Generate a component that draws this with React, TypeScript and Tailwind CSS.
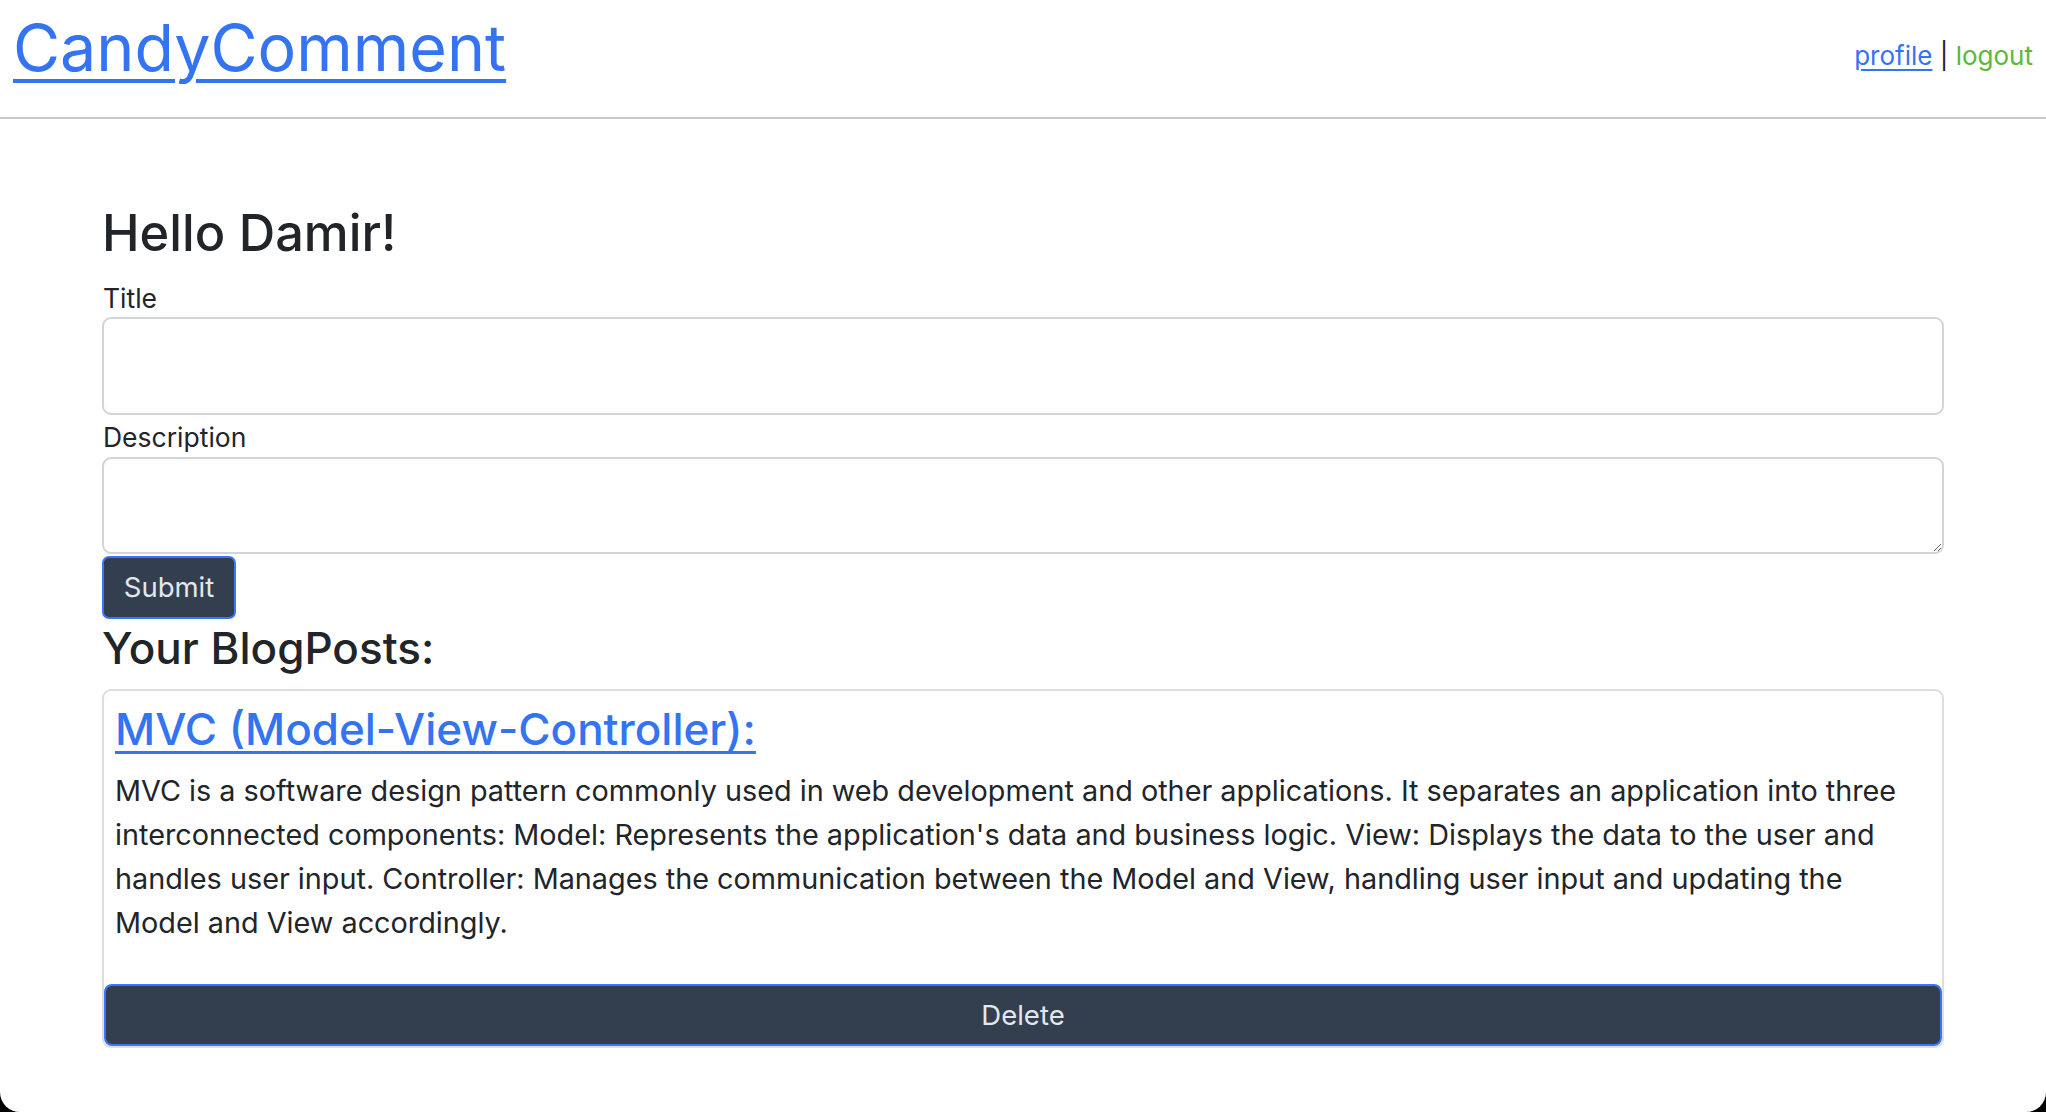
import { useState } from "react";

const post = {
  title: "MVC (Model-View-Controller):",
  body:
    "MVC is a software design pattern commonly used in web development and other applications. It separates an application into three interconnected components: Model: Represents the application's data and business logic. View: Displays the data to the user and handles user input. Controller: Manages the communication between the Model and View, handling user input and updating the Model and View accordingly.",
};

const font = "font-['Inter','Noto_Sans',sans-serif]";

const Header = () => (
  <header className="flex h-[119px] items-start justify-between border-b-2 border-[#c9c9c9] px-[13px]">
    <a
      href="#"
      className="pt-[10px] text-[64.5px] leading-[1.2] text-[#3474f2] underline decoration-[4px] underline-offset-[8px]"
    >
      CandyComment
    </a>
    <div className="pt-[36px] text-[26px] leading-[1.5] text-[#212529]">
      <a href="#" className="text-[#3474f2] underline underline-offset-[4px]">
        profile
      </a>{" "}
      |{" "}
      <a href="#" className="text-[#5cb83a]">
        logout
      </a>
    </div>
  </header>
);

const App = () => {
  const [title, setTitle] = useState("");
  const [desc, setDesc] = useState("");

  return (
    <div className={`h-screen bg-black ${font}`}>
      <div className="h-full overflow-hidden rounded-b-[20px] bg-white text-[#212529]">
        <Header />

        <main className="mx-[102px] flex flex-col">
          <h2 className="mt-[84px] text-[50.5px] font-medium leading-[1.2]">
            Hello Damir!
          </h2>

          <label className="mt-[16px] pl-px text-[26.5px] leading-[1.42]">Title</label>
          <input
            value={title}
            onChange={e => setTitle(e.target.value)}
            className="h-[98px] rounded-[9px] border-2 border-[#d0d5da] px-4 text-[27px] outline-none"
          />

          <label className="mt-[4px] pl-px text-[26.5px] leading-[1.42]">
            Description
          </label>
          <textarea
            value={desc}
            onChange={e => setDesc(e.target.value)}
            className="h-[97px] rounded-[9px] border-2 border-[#d0d5da] px-4 py-2 text-[27px] outline-none"
          />

          <button
            type="button"
            className="mt-[2px] h-[63px] w-[134px] rounded-[7px] border-2 border-[#3a76f6] bg-[#333f4f] text-[27.5px] text-[#e2e8ee]"
          >
            Submit
          </button>

          <h3 className="mt-[3px] text-[44px] font-medium leading-[1.2]">
            Your BlogPosts:
          </h3>

          <div className="mt-[14px] flex flex-col rounded-[9px] border-2 border-[#dedede]">
            <div className="px-[11px] pt-[12px]">
              <a
                href="#"
                className="text-[44px] font-medium leading-[1.2] text-[#3474f2] underline decoration-[3px] underline-offset-[6px]"
              >
                {post.title}
              </a>
              <p className="mt-[14px] text-[28.8px] leading-[44px]">{post.body}</p>
            </div>
            <button
              type="button"
              className="mt-[39px] h-[62px] rounded-[8px] border-2 border-[#3a76f6] bg-[#333f4f] text-[27.5px] text-[#e2e8ee]"
            >
              Delete
            </button>
          </div>
        </main>
      </div>
    </div>
  );
};

export default App;
